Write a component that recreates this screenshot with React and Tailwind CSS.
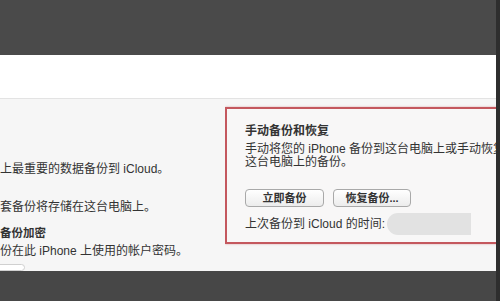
import React from 'react';

// --- tombol gaya lama (aqua-ish) ---
function OldButton({ children, className = '' }) {
  return (
    <div
      className={`h-[18px] flex items-center justify-center rounded-[4px] border border-[#a9a9a9] bg-gradient-to-b from-white to-[#ececec] text-[11px] font-bold text-[#333] ${className}`}
    >
      {children}
    </div>
  );
}

export default function App() {
  const font = { fontFamily: '"Liberation Sans", "Noto Sans CJK SC", sans-serif' };

  return (
    <div className="w-[500px] h-[301px] flex overflow-hidden bg-[#4a4a4a]" style={font}>
      <div className="w-[496px] flex flex-col">
        {/* top dark bar */}
        <div className="h-[55px] bg-[#4a4a4a]"></div>

        {/* white header */}
        <div className="h-[44px] bg-white border-b border-[#e3e3e3]"></div>

        {/* content */}
        <div className="flex-1 flex bg-[#f6f6f6] overflow-hidden text-[#333]">
          {/* left column (cropped) */}
          <div className="w-[225px] shrink-0 flex flex-col overflow-hidden">
            <p className="mt-[62px] text-[12px] leading-[16px] whitespace-nowrap">上最重要的数据备份到 iCloud。</p>
            <p className="mt-[22px] text-[12px] leading-[16px] whitespace-nowrap">套备份将存储在这台电脑上。</p>
            <p className="mt-[11px] text-[11.5px] leading-[14px] font-bold whitespace-nowrap">备份加密</p>
            <p className="mt-[3px] text-[12px] leading-[16px] whitespace-nowrap">份在此 iPhone 上使用的帐户密码。</p>
            <div className="mt-[5px] -ml-[20px] w-[45px] h-[14px] rounded-[4px] border border-[#d0d0d0] bg-white"></div>
          </div>

          {/* right box */}
          <div className="flex-1 pt-[8px] overflow-hidden">
            <div className="w-[300px] h-[137px] border-2 border-[#c4585e] shadow-[0_0_2px_rgba(196,88,94,0.5)] bg-[#f8f7f7] pl-[18px] pt-[14px]">
              <p className="text-[12px] leading-[16px] font-bold">手动备份和恢复</p>
              <p className="mt-[3px] text-[12px] leading-[14px] whitespace-nowrap">手动将您的 iPhone 备份到这台电脑上或手动恢复存储在</p>
              <p className="text-[12px] leading-[13px]">这台电脑上的备份。</p>
              <div className="mt-[20px] flex gap-[9px]">
                <OldButton className="w-[79px]">立即备份</OldButton>
                <OldButton className="w-[78px]">恢复备份...</OldButton>
              </div>
              <div className="mt-[6px] flex items-center h-[22px]">
                <span className="text-[12px] leading-[14px] whitespace-nowrap">上次备份到 iCloud 的时间:</span>
                <div className="ml-[2px] w-[84px] h-[22px] rounded-l-full bg-[#e2e2e2]"></div>
              </div>
            </div>
          </div>
        </div>

        {/* bottom dark bar */}
        <div className="h-[30px] bg-[#474747]"></div>
      </div>
      <div className="w-[4px] bg-[#2e2e2e]"></div>
    </div>
  );
}
